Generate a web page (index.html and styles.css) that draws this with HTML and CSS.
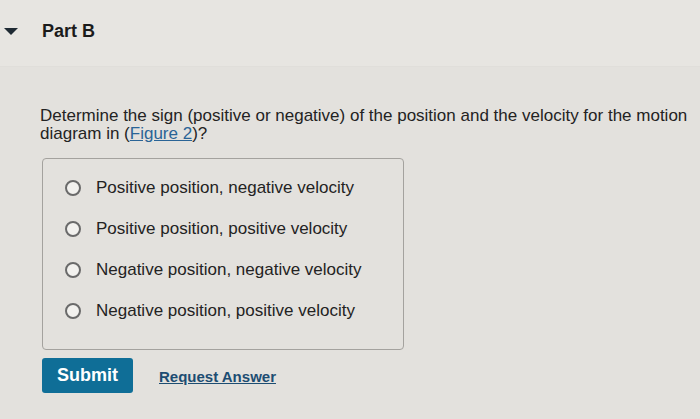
FILE: index.html
```html
<!DOCTYPE html>
<html lang="en">
<head>
    <meta charset="UTF-8">
    <title>Part B</title>
    <link rel="stylesheet" href="styles.css">
</head>
<body>
    <div class="part-header">
        <span class="caret"></span>
        <h2>Part B</h2>
    </div>

    <div class="part-body">
        <p class="prompt">Determine the sign (positive or negative) of the position and the velocity for the motion diagram in (<a href="#" class="fig-link">Figure 2</a>)?</p>

        <div class="choices">
            <label class="choice"><span class="radio"></span>Positive position, negative velocity</label>
            <label class="choice"><span class="radio"></span>Positive position, positive velocity</label>
            <label class="choice"><span class="radio"></span>Negative position, negative velocity</label>
            <label class="choice"><span class="radio"></span>Negative position, positive velocity</label>
        </div>

        <div class="actions">
            <button class="submit">Submit</button>
            <a href="#" class="request">Request Answer</a>
        </div>
    </div>
</body>
</html>
```

FILE: styles.css
```css
body {
    margin: 0;
    background: #e3e1dd;
    font-family: "Liberation Sans", Arial, sans-serif;
    color: #232323;
    width: 700px;
    height: 419px;
    overflow: hidden;
}
.part-header {
    display: flex;
    align-items: center;
    height: 66px;
    padding-left: 4px;
    background: #e7e5e1;
    border-bottom: 1px solid #e0deda;
}
.caret {
    width: 0;
    height: 0;
    border-left: 7px solid transparent;
    border-right: 7px solid transparent;
    border-top: 7px solid #1f2a33;
    margin-top: -4px;
}
.part-header h2 {
    margin: 0 0 4px 24px;
    font-size: 18px;
    font-weight: bold;
    color: #1b1b1b;
}
.part-body {
    padding: 0 0 0 40px;
}
.prompt {
    margin: 40px 0 0;
    font-size: 17px;
    line-height: 18px;
    width: 660px;
}
.fig-link {
    color: #2a6496;
    text-decoration: underline;
}
.choices {
    margin: 15px 0 0 2px;
    width: 362px;
    height: 192px;
    border: 1px solid #a4a29e;
    border-radius: 4px;
    padding: 19px 0 0 0;
    box-sizing: border-box;
    display: flex;
    flex-direction: column;
    gap: 21px;
}
.choice {
    display: flex;
    align-items: center;
    font-size: 17px;
    line-height: 20px;
    padding-left: 22px;
}
.radio {
    width: 12px;
    height: 12px;
    border: 2px solid #6a6a6a;
    border-radius: 50%;
    margin-right: 15px;
    background: #f2f1ee;
}
.actions {
    display: flex;
    align-items: center;
    gap: 26px;
    margin-top: 8px;
    margin-left: 2px;
}
.submit {
    width: 91px;
    height: 35px;
    background: #0f6e97;
    color: #fff;
    border: none;
    border-radius: 3px;
    font-family: inherit;
    font-size: 18px;
    font-weight: bold;
}
.request {
    color: #1d4d72;
    font-weight: bold;
    font-size: 15px;
    text-decoration: underline;
    margin-top: 2px;
}
```
